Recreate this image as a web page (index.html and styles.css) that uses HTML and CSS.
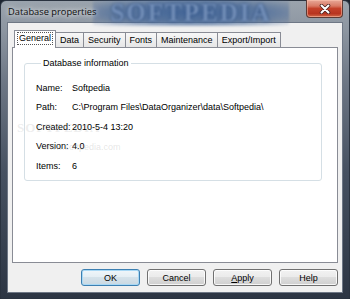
FILE: index.html
```html
<!DOCTYPE html>
<html>
<head>
<meta charset="utf-8">
<link rel="stylesheet" href="styles.css">
</head>
<body>
<div class="window">
  <div class="titlebar">
    <div class="watermark"><span>SOFTPEDIA</span></div>
    <span class="title">Database properties</span>
    <div class="close">
      <svg width="14" height="10" viewBox="0 0 14 10">
        <path d="M3.5 1.5 L10.5 8.5 M10.5 1.5 L3.5 8.5" stroke="#4a2220" stroke-width="3.6" stroke-linecap="round"/>
        <path d="M3.5 1.5 L10.5 8.5 M10.5 1.5 L3.5 8.5" stroke="#ffffff" stroke-width="2" stroke-linecap="round"/>
      </svg>
    </div>
  </div>
  <div class="client">
    <div class="tabs">
      <div class="tab selected"><span class="focus">General</span></div>
      <div class="tab">Data</div>
      <div class="tab">Security</div>
      <div class="tab">Fonts</div>
      <div class="tab">Maintenance</div>
      <div class="tab">Export/Import</div>
    </div>
    <div class="panel">
      <fieldset class="group">
        <legend>Database information</legend>
        <div class="grid">
          <span>Name:</span><span>Softpedia</span>
          <span>Path:</span><span>C:\Program Files\DataOrganizer\data\Softpedia\</span>
          <span>Created:</span><span>2010-5-4 13:20</span>
          <span>Version:</span><span>4.0</span>
          <span>Items:</span><span>6</span>
        </div>
      </fieldset>
      <div class="wm-small">SOFTPEDIA</div>
      <div class="wm-url">www.softpedia.com</div>
    </div>
    <div class="buttons">
      <div class="btn default">OK</div>
      <div class="btn">Cancel</div>
      <div class="btn"><u>A</u>pply</div>
      <div class="btn">Help</div>
    </div>
  </div>
</div>
</body>
</html>
```
FILE: styles.css
```css
* { box-sizing: border-box; }
html, body { margin: 0; padding: 0; }
body {
  width: 350px;
  height: 299px;
  overflow: hidden;
  background: #1c2430;
  font-family: "Liberation Sans", Arial, sans-serif;
  font-size: 9px;
  color: #000;
}
.window {
  width: 350px;
  height: 299px;
  border: 1px solid #2a3340;
  border-radius: 6px 6px 0 0;
  background: linear-gradient(to bottom, #9aa3ad 0px, #8c95a0 30px, #6d7785 80px, #465161 170px, #2c3543 299px);
  padding: 0 6px 5px 6px;
  display: flex;
  flex-direction: column;
  position: relative;
}
.titlebar {
  height: 21px;
  display: flex;
  align-items: center;
  position: relative;
}
.watermark {
  position: absolute;
  left: 86px;
  top: -2px;
  width: 196px;
  height: 27px;
  background: radial-gradient(ellipse at center, rgba(62, 98, 150, 0.95) 0%, rgba(75, 108, 155, 0.8) 50%, rgba(120, 140, 165, 0) 100%);
  filter: blur(0.8px);
  z-index: 2;
  display: flex;
  align-items: center;
  justify-content: center;
  overflow: hidden;
}
.watermark span {
  font-family: "Liberation Serif", serif;
  font-weight: bold;
  font-size: 25px;
  letter-spacing: 2px;
  line-height: 27px;
  color: rgba(125, 152, 192, 0.85);
  text-shadow: 0 0 3px #23457a;
}
.title {
  position: relative;
  z-index: 3;
  font-family: "Open Sans", "Liberation Sans", sans-serif;
  font-size: 9.3px;
  color: #0e0e0e;
  padding-left: 1px;
  text-shadow: 0 0 4px rgba(255,255,255,0.9), 0 0 8px rgba(255,255,255,0.7);
}
.close {
  margin-left: auto;
  align-self: flex-start;
  margin-top: -1px;
  width: 37px;
  height: 18px;
  border: 1px solid #5d3a34;
  border-top: none;
  border-radius: 0 0 4px 4px;
  background: linear-gradient(to bottom, #e8a898 0%, #d97a65 35%, #c4412a 50%, #b8341f 80%, #d06a4a 100%);
  box-shadow: inset 0 0 0 1px rgba(255, 200, 180, 0.5);
  display: flex;
  align-items: center;
  justify-content: center;
  position: relative;
  z-index: 3;
}
.client {
  flex: 1;
  background: #f0f0f0;
  border: 1px solid #6e7785;
  display: flex;
  flex-direction: column;
  padding: 7px 4px 6px 4px;
}
.tabs {
  height: 17px;
  display: flex;
  align-items: flex-end;
  padding-left: 2px;
}
.tab {
  height: 15px;
  padding: 0 4px;
  border: 1px solid #898c95;
  border-bottom: none;
  border-right: none;
  background: linear-gradient(to bottom, #f7f7f7, #e6e6e6);
  line-height: 14px;
  white-space: nowrap;
}
.tab:last-child { border-right: 1px solid #898c95; }
.tab.selected {
  height: 18px;
  margin-bottom: -1px;
  background: #fff;
  border-right: 1px solid #898c95;
  margin-right: -1px;
  position: relative;
  z-index: 1;
  padding: 1px 2px 0 2px;
  line-height: 13px;
}
.focus {
  display: inline-block;
  border: 1px dotted #555;
  padding: 0 1px;
  line-height: 11px;
}
.panel {
  flex: 1;
  background: #fff;
  border: 1px solid #898c95;
  padding: 10px 15px 0 11px;
  position: relative;
}
.group {
  margin: 0;
  border: 1px solid #d5dfe5;
  border-radius: 3px;
  padding: 9px 0 4px 11px;
  min-width: 0;
}
.group legend {
  margin-left: 5px;
  padding: 0 2px;
  line-height: 11px;
  color: #000;
}
.grid {
  display: grid;
  grid-template-columns: 36px auto;
  grid-auto-rows: 19.5px;
  align-items: center;
}
.wm-small {
  position: absolute;
  left: 4px;
  top: 72px;
  font-family: "Liberation Serif", serif;
  font-weight: bold;
  font-size: 13px;
  letter-spacing: 1px;
  color: rgba(150, 150, 150, 0.18);
}
.wm-url {
  position: absolute;
  left: 30px;
  top: 94px;
  font-size: 9px;
  color: rgba(150, 150, 150, 0.25);
}
.buttons {
  display: flex;
  justify-content: flex-end;
  gap: 7px;
  margin-top: 6px;
}
.btn {
  width: 59px;
  height: 17px;
  border: 1px solid #707070;
  border-radius: 3px;
  background: linear-gradient(to bottom, #f2f2f2 0%, #ebebeb 45%, #dddddd 50%, #cfcfcf 100%);
  box-shadow: inset 0 0 0 1px rgba(255,255,255,0.8);
  display: flex;
  align-items: center;
  justify-content: center;
  font-size: 9px;
}
.btn.default {
  border-color: #3c7fb1;
  box-shadow: inset 0 0 0 1px #a8d8f5;
  background: linear-gradient(to bottom, #f0f6fa 0%, #e5eef4 45%, #d5e2ea 50%, #c9d8e2 100%);
}
```
